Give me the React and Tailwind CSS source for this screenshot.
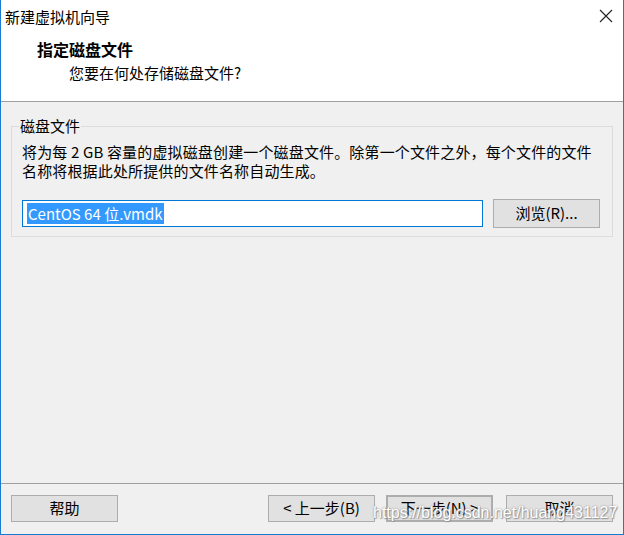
import React from "react";

const F = { fontFamily: '"Noto Sans CJK SC", "Noto Sans", sans-serif' };

function Btn({ children, className = "" }) {
  return (
    <div
      className={`flex items-center justify-center h-[27px] w-[107px] bg-[#e1e1e1] border border-[#adadad] text-[15px] text-black ${className}`}
    >
      {children}
    </div>
  );
}

export default function App() {
  return (
    <div
      className="w-[624px] h-[535px] bg-[#f0f0f0] border-x border-b border-[#1b7bd4] flex flex-col relative overflow-hidden"
      style={F}
    >
      <div className="bg-white h-[101px] flex flex-col">
        <div className="h-[32px] flex items-center justify-between pl-[4px] pr-[10px]">
          <span className="text-[15px] text-black leading-none">新建虚拟机向导</span>
          <svg width="14" height="14" viewBox="0 0 14 14">
            <path d="M1 1 L13 13 M13 1 L1 13" stroke="#222" strokeWidth="1.1" />
          </svg>
        </div>
        <div className="pl-[36px] mt-[5px] text-[16px] font-bold text-black leading-[24px]">指定磁盘文件</div>
        <div className="pl-[68px] text-[15px] text-black leading-[24px]">您要在何处存储磁盘文件?</div>
      </div>
      <div className="h-[1px] bg-[#a0a0a0]" />
      <div className="flex-1 flex flex-col px-[10px] pt-[15px]">
        <div className="relative border border-[#dcdcdc] h-[111px] mt-[9px] pl-[10px] pr-[10px]">
          <span className="absolute left-[7px] -top-[12px] bg-[#f0f0f0] px-[1px] text-[15px] leading-[22px] text-black">磁盘文件</span>
          <div className="mt-[15px] text-[15px] leading-[19px] text-black tracking-[0.15px]">
            将为每 2 GB 容量的虚拟磁盘创建一个磁盘文件。除第一个文件之外，每个文件的文件
            <br />
            名称将根据此处所提供的文件名称自动生成。
          </div>
          <div className="flex items-center mt-[19px]">
            <div className="w-[461px] h-[27px] border border-[#0078d7] bg-white flex items-center pl-[4px]">
              <span className="bg-[#3399ff] text-white text-[15px] leading-[21px] px-[1px]">CentOS 64 位.vmdk</span>
            </div>
            <Btn className="ml-[10px] h-[29px]">浏览(R)...</Btn>
          </div>
        </div>
      </div>
      <div className="h-[1px] bg-[#a0a0a0] mx-0" />
      <div className="h-[50px] flex items-center px-[10px] pb-[1px]">
        <Btn>帮助</Btn>
        <div className="flex-1" />
        <Btn>&lt; 上一步(B)</Btn>
        <Btn className="ml-[11px] border-[#0078d7] border-2">下一步(N) &gt;</Btn>
        <Btn className="ml-[13px]">取消</Btn>
      </div>
      <div
        className="absolute left-[372px] top-[505px] text-[16px] text-white leading-none whitespace-nowrap"
        style={{ fontFamily: '"Liberation Sans", sans-serif', textShadow: "0 0 2px #888, 1px 1px 1px #999" }}
      >
        https://blog.csdn.net/huang431127
      </div>
    </div>
  );
}
